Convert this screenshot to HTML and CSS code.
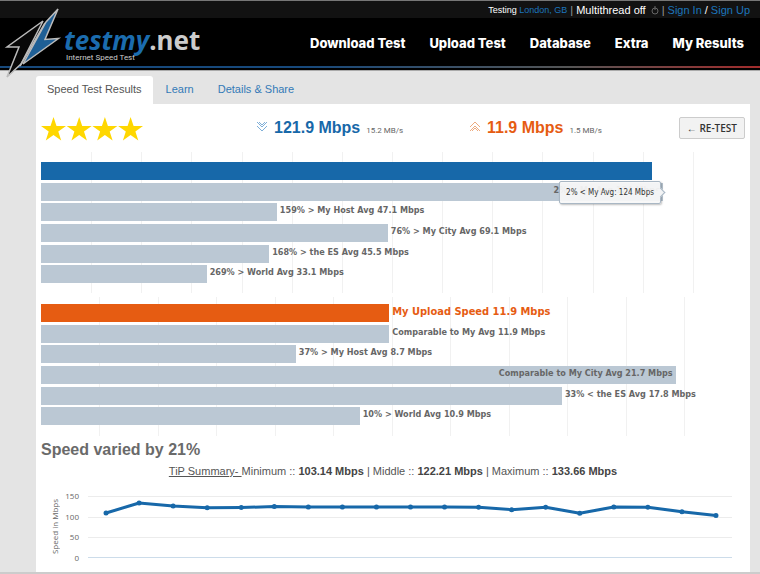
FILE: index.html
```html
<!DOCTYPE html>
<html lang="en">
<head>
    <meta charset="UTF-8">
    <meta name="viewport" content="width=device-width, initial-scale=1.0">
    <title>Speed Test Results</title>
    <link rel="stylesheet" href="styles.css">
</head>
<body>
    <header class="header">
        <div class="topbar">
            <span class="small">Testing <a href="#">London, GB</a></span>
            <span class="sep">|</span>
            <span>Multithread off</span>
            <svg class="power" viewBox="0 0 8 10" width="8" height="10"><circle cx="4" cy="6" r="3"/><path d="M4 1v4"/></svg>
            <span class="sep">|</span>
            <a href="#">Sign In</a> <span>/</span> <a href="#">Sign Up</a>
        </div>
        <div class="masthead">
            <a class="logo" href="#">
                <span class="logo-name"><span class="logo-blue">testmy</span>.net</span>
                <span class="logo-tag">Internet Speed Test</span>
            </a>
            <nav class="nav">
                <a href="#">Download Test</a>
                <a href="#">Upload Test</a>
                <a href="#">Database</a>
                <a href="#">Extra</a>
                <a href="#">My Results</a>
            </nav>
        </div>
        <svg class="bolt" viewBox="0 0 64 80" width="64" height="80">
            <path class="bolt-dark" d="M43 21L7 47H19L7 77L21 64Z"/>
            <path class="bolt-line" d="M45 23L20 66"/>
            <path class="bolt-blue" d="M58 9L45 39.500L58.500 38.500L23 64L46 22Z"/>
        </svg>
    </header>

    <main class="page">
        <nav class="tabs">
            <a class="tab active" href="#">Speed Test Results</a>
            <a class="tab" href="#">Learn</a>
            <a class="tab" href="#">Details &amp; Share</a>
        </nav>

        <div class="panel">
            <section class="summary">
                <svg class="stars" viewBox="0 0 102 24" width="102" height="24">
                    <defs><path id="star" d="M12.500 0L15.500 9H25L17.300 14.500L20.200 23.500L12.500 18L4.800 23.500L7.700 14.500L0 9H9.500Z"/></defs>
                    <use href="#star"/>
                    <use href="#star" x="25.700"/>
                    <use href="#star" x="51.400"/>
                    <use href="#star" x="77.100"/>
                </svg>
                <div class="speed down">
                    <svg viewBox="0 0 12 12" width="12" height="12"><path d="M1 1l5 5 5-5M1 5l5 5 5-5M3 1l3 3 3-3"/></svg>
                    <strong>121.9 Mbps</strong>
                    <small>15.2 MB/s</small>
                </div>
                <div class="speed up">
                    <svg viewBox="0 0 12 12" width="12" height="12"><path d="M1 6l5-5 5 5M1 10l5-5 5 5M3 10l3-3 3 3"/></svg>
                    <strong>11.9 Mbps</strong>
                    <small>1.5 MB/s</small>
                </div>
                <button class="retest" type="button">← RE-TEST</button>
            </section>

            <section class="chart chart-down">
                <div class="row"><div class="bar blue" style="width: 87.1%"></div></div>
                <div class="row">
                    <div class="bar" style="width: 88.600%"><span class="inside">2% &lt; My Avg 124 Mbps</span>
                        <div class="tooltip">2% &lt; My Avg: 124 Mbps</div>
                    </div>
                </div>
                <div class="row"><div class="bar" style="width: 33.600%"></div><span class="label">159% &gt; My Host Avg 47.1 Mbps</span></div>
                <div class="row"><div class="bar" style="width: 49.400%"></div><span class="label">76% &gt; My City Avg 69.1 Mbps</span></div>
                <div class="row"><div class="bar" style="width: 32.500%"></div><span class="label">168% &gt; the ES Avg 45.5 Mbps</span></div>
                <div class="row"><div class="bar" style="width: 23.600%"></div><span class="label">269% &gt; World Avg 33.1 Mbps</span></div>
            </section>

            <section class="chart chart-up">
                <div class="row"><div class="bar orange" style="width: 49.600%"></div><span class="label mine">My Upload Speed 11.9 Mbps</span></div>
                <div class="row"><div class="bar" style="width: 49.600%"></div><span class="label">Comparable to My Avg 11.9 Mbps</span></div>
                <div class="row"><div class="bar" style="width: 36.300%"></div><span class="label">37% &gt; My Host Avg 8.7 Mbps</span></div>
                <div class="row"><div class="bar" style="width: 90.400%"><span class="inside">Comparable to My City Avg 21.7 Mbps</span></div></div>
                <div class="row"><div class="bar" style="width: 74.200%"></div><span class="label">33% &lt; the ES Avg 17.8 Mbps</span></div>
                <div class="row"><div class="bar" style="width: 45.400%"></div><span class="label">10% &gt; World Avg 10.9 Mbps</span></div>
            </section>

            <h2 class="varied">Speed varied by 21%</h2>
            <p class="tip"><a href="#">TiP Summary- </a>Minimum :: <b>103.14 Mbps</b> | Middle :: <b>122.21 Mbps</b> | Maximum :: <b>133.66 Mbps</b></p>

            <section class="trend">
                <div class="trend-title">Speed in Mbps</div>
                <div class="trend-axis"><span>150</span><span>100</span><span>50</span><span>0</span></div>
                <svg class="trend-plot" viewBox="0 0 643 62" preserveAspectRatio="none">
                    <path class="grid" d="M0 .5H643M0 21.500H643M0 41.500H643"/>
                    <path class="base" d="M0 61.500H643"/>
                    <path class="line" d="M18 17L51 7L85 10L119 11.800L153 11.500L186 10.600L220 11.100L254 11.100L288 11L322 11L356 11L390 11.200L423 13.700L457 11.200L491 17.200L525 11L559 11.200L593 15.700L627 19.500"/>
                    <path class="dots" d="M18 17h.01M51 7h.01M85 10h.01M119 11.800h.01M153 11.500h.01M186 10.600h.01M220 11.100h.01M254 11.100h.01M288 11h.01M322 11h.01M356 11h.01M390 11.200h.01M423 13.700h.01M457 11.200h.01M491 17.200h.01M525 11h.01M559 11.200h.01M593 15.700h.01M627 19.500h.01"/>
                </svg>
            </section>
        </div>
    </main>
</body>
</html>
```
FILE: styles.css
```css
* {
    box-sizing: border-box;
}
body {
    margin: 0;
    font-family: "Liberation Sans", Arial, sans-serif;
    font-size: 11px;
    color: #555;
    background-color: #e4e4e4;
}
a {
    color: #337ab7;
    text-decoration: none;
}

/* Header */
.header {
    position: relative;
    background: #000;
    border-top: 1px solid #777;
    border-bottom: 1px solid #aaa;
    padding-bottom: 2px;
}
.topbar {
    display: flex;
    justify-content: flex-end;
    align-items: center;
    gap: 3px;
    height: 17px;
    padding-right: 10px;
    color: #fff;
    background: #121212;
}
.topbar a {
    color: #1c75bc;
}
.topbar .small {
    font-size: 9px;
}
.topbar .sep {
    color: #999;
}
.power {
    margin-left: 2px;
    fill: none;
    stroke: #666;
}
.masthead {
    display: flex;
    justify-content: space-between;
    align-items: center;
    height: 50px;
    padding: 2px 16px 0 64px;
    border-bottom: 2px solid;
    border-image: linear-gradient(to right, #17497c 40%, #555 75%, #a32b2b) 1;
}
.logo {
    display: flex;
    flex-direction: column;
    padding-top: 4px;
    color: #ccc;
}
.logo-name {
    font-family: "Noto Sans", sans-serif;
    font-size: 26px;
    font-weight: 700;
    line-height: 26px;
}
.logo-blue {
    color: #1b6cae;
    font-style: italic;
}
.logo-tag {
    padding-left: 2px;
    font-family: Roboto, sans-serif;
    font-size: 8px;
    line-height: 10px;
}
.nav {
    display: flex;
    gap: 24px;
}
.nav a {
    color: #fff;
    font-family: Inter, sans-serif;
    font-size: 13px;
    font-weight: 800;
    line-height: 16px;
}
.bolt {
    position: absolute;
    top: -1px;
    left: 0;
    stroke: #bbb;
    stroke-width: 1.5;
}
.bolt-dark {
    fill: #080808;
}
.bolt-blue {
    fill: #1f5f95;
}

/* Tabs */
.page {
    padding: 5px 10px 0 36px;
    border-bottom: 2px solid #ccc;
}
.tabs {
    display: flex;
    gap: 2px;
}
.tab {
    padding: 6px 11px 8px;
    line-height: 14px;
    border-radius: 3px 3px 0 0;
}
.tab.active {
    color: #555;
    background: #fff;
}
.panel {
    padding: 11px 5px 9px;
    background: #fff;
}

/* Summary line */
.summary {
    display: grid;
    grid-template-columns: 215px 213px 1fr auto;
    align-items: center;
    height: 24px;
    margin-bottom: 13px;
}
.stars {
    fill: #ffd700;
    margin-top: 2px;
}
.speed {
    display: flex;
    align-items: baseline;
    gap: 6px;
}
.speed svg {
    fill: none;
    stroke-width: 0.8;
}
.speed strong {
    font-size: 16px;
    line-height: 20px;
}
.speed small {
    font-family: Roboto, sans-serif;
    font-size: 8px;
    color: #666;
}
.down {
    color: #1768a9;
    stroke: #5e9bce;
}
.up {
    color: #e65c12;
    stroke: #e8955f;
}
.retest {
    padding: 3px 7px;
    color: #333;
    font-family: "Open Sans", sans-serif;
    font-size: 10px;
    font-weight: 600;
    line-height: 14px;
    background: #f2f2f2;
    border: 1px solid #ccc;
    border-radius: 2px;
}

/* Bar charts */
.chart {
    display: grid;
    grid-template-rows: repeat(6, 1fr);
    margin-right: 2px;
    font-family: "DejaVu Sans Condensed", "DejaVu Sans", sans-serif;
    font-size: 9px;
    font-weight: 700;
    color: #666;
}
.chart-down {
    height: 141px;
    padding: 10px 0 7px;
    background:
        linear-gradient(#fff, #fff) 0 0 / 1px 100% no-repeat,
        repeating-linear-gradient(to right, #f1f1f1 0 1px, #fff 1px calc(100% / 14));
}
.chart-up {
    height: 139px;
    margin-top: 4px;
    padding: 7px 0 8px;
    background:
        linear-gradient(#fff, #fff) 0 0 / 1px 100% no-repeat,
        repeating-linear-gradient(to right, #f1f1f1 0 1px, #fff 1px calc(100% / 12));
}
.row {
    display: flex;
    align-items: flex-start;
    gap: 3px;
    line-height: 15px;
}
.bar {
    position: relative;
    flex: none;
    height: 18px;
    padding-right: 3px;
    text-align: right;
    background: #bbc8d4;
}
.bar.blue {
    background: #1768a9;
}
.bar.orange {
    background: #e65c12;
}
.inside {
    display: block;
}
.label {
    white-space: nowrap;
}
.label.mine {
    font-size: 11px;
    color: #e65c12;
}
.tooltip {
    position: absolute;
    top: -2px;
    right: 2px;
    padding: 3px 6px;
    color: #333;
    font-weight: 400;
    font-size: 8px;
    white-space: nowrap;
    background: rgba(247, 247, 247, 0.93);
    border: 1px solid #a9b7c4;
    border-radius: 2px;
    box-shadow: 1px 1px 2px rgba(0, 0, 0, 0.25);
}
.tooltip::after {
    content: "";
    position: absolute;
    top: 7px;
    right: -4px;
    width: 6px;
    height: 6px;
    background: #f3f4f5;
    border: solid #a9b7c4;
    border-width: 1px 1px 0 0;
    transform: rotate(45deg);
}

/* Variation over time */
.varied {
    margin: 4px 0;
    font-size: 16px;
    line-height: 20px;
    color: #6a6a6a;
}
.tip {
    margin: 0;
    text-align: center;
    line-height: 14px;
}
.tip a {
    color: #555;
    text-decoration: underline;
}
.tip b {
    color: #444;
}
.trend {
    display: flex;
    height: 72px;
    margin: 13px 13px 0 9px;
    font-family: "Open Sans", sans-serif;
    font-size: 8px;
    line-height: 10px;
    color: #666;
}
.trend-title {
    align-self: center;
    writing-mode: vertical-rl;
    transform: rotate(180deg);
}
.trend-axis {
    display: flex;
    flex-direction: column;
    justify-content: space-between;
    width: 19px;
    margin-right: 9px;
    text-align: right;
}
.trend-plot {
    flex: 1;
    min-width: 0;
    height: 62px;
    margin-top: 5px;
    fill: none;
    overflow: visible;
}
.trend-plot path {
    vector-effect: non-scaling-stroke;
}
.grid {
    stroke: #ececec;
}
.base {
    stroke: #ccdcea;
}
.line {
    stroke: #1768a9;
    stroke-width: 3;
    stroke-linejoin: round;
}
.dots {
    stroke: #1768a9;
    stroke-width: 5;
    stroke-linecap: round;
}
```
